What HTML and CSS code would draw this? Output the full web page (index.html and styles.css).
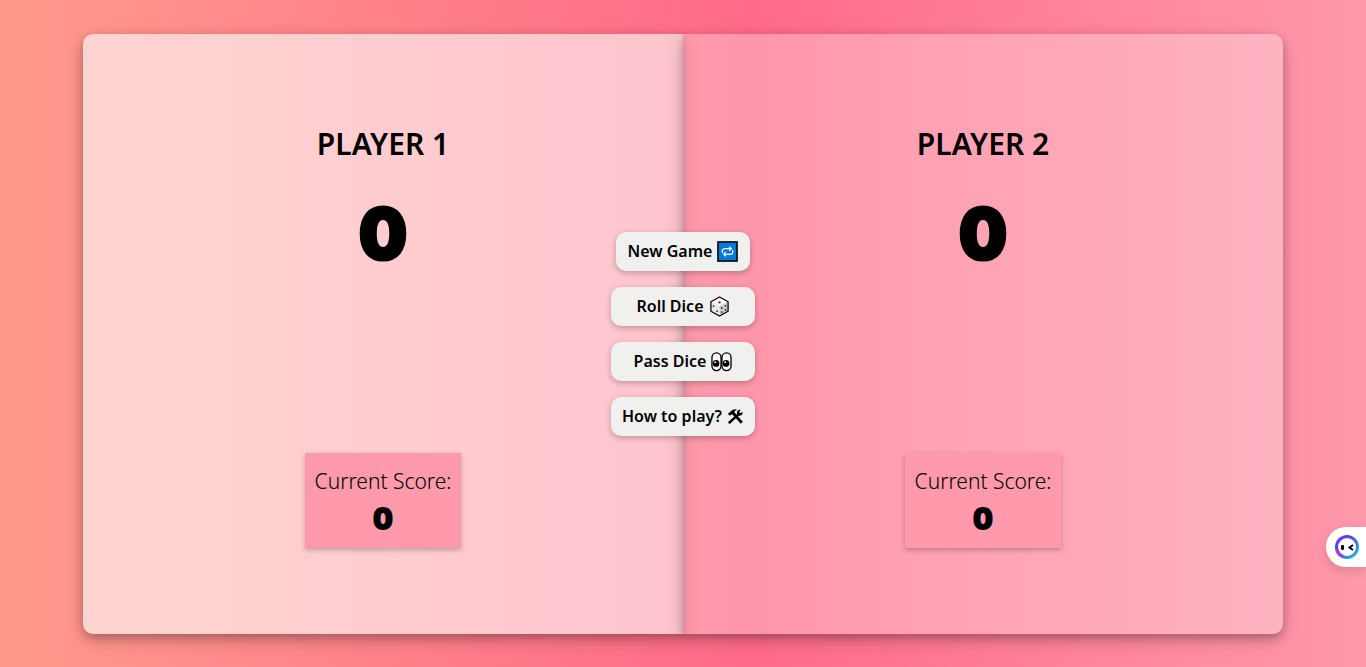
FILE: index.html
```html
<!DOCTYPE html>
<html lang="en">
<head>
<meta charset="utf-8">
<meta name="viewport" content="width=device-width, initial-scale=1">
<title>Dice Game</title>
<link rel="stylesheet" href="styles.css">
</head>
<body>
<main class="board">
  <section class="player player-one">
    <h1 class="name">PLAYER 1</h1>
    <p class="score">0</p>
    <div class="current">
      <p class="current-label">Current Score:</p>
      <p class="current-score">0</p>
    </div>
  </section>
  <section class="player player-two">
    <h1 class="name">PLAYER 2</h1>
    <p class="score">0</p>
    <div class="current">
      <p class="current-label">Current Score:</p>
      <p class="current-score">0</p>
    </div>
  </section>
  <div class="controls">
    <button type="button" class="btn btn-new">New Game
      <svg class="icon" viewBox="0 0 22 22" aria-hidden="true">
        <rect x="1" y="1" width="20" height="20" fill="#0a78d6" stroke="#000" stroke-width="1.6"/>
        <g fill="none" stroke="#fff" stroke-width="1.2">
          <path d="M6 12.500C4.500 10 6 8 8.500 8H14.500M12.800 5.800L15 8L12.800 10.200"/>
          <path d="M16 9.500C17.500 12 16 14 13.500 14H7.500M9.200 11.800L7 14L9.200 16.200"/>
        </g>
      </svg>
    </button>
    <button type="button" class="btn">Roll Dice
      <svg class="icon" viewBox="0 0 22 22" aria-hidden="true">
        <path d="M11 1L20 6V16L11 21L2 16V6Z" fill="#fff"/>
        <path d="M11 10.500L20 6V16L11 21Z" fill="#ccc"/>
        <path d="M2 6L11 10.500V21L2 16Z" fill="#e8e8e8"/>
        <path d="M11 1L20 6V16L11 21L2 16V6Z" fill="none" stroke="#000" stroke-width="1.300" stroke-linejoin="round"/>
        <ellipse cx="11" cy="6.700" rx="1.400" ry="1.100" fill="#c8102e"/>
        <g fill="#222"><circle cx="4.800" cy="10.500" r=".9"/><circle cx="8.500" cy="15.800" r=".9"/><circle cx="13.300" cy="12.500" r=".9"/><circle cx="17.300" cy="10.300" r=".9"/><circle cx="13.300" cy="16.800" r=".9"/><circle cx="17.300" cy="14.500" r=".9"/></g>
      </svg>
    </button>
    <button type="button" class="btn">Pass Dice
      <svg class="icon" viewBox="0 0 22 22" aria-hidden="true">
        <g fill="#fff" stroke="#000" stroke-width="1.400"><rect x="1" y="2" width="9.500" height="18.500" rx="4.700"/><rect x="11.500" y="2" width="9.500" height="18.500" rx="4.700"/></g>
        <circle cx="5.300" cy="13" r="3.500"/><circle cx="15.800" cy="13" r="3.500"/>
        <circle cx="4.400" cy="11.700" r="1" fill="#fff"/><circle cx="14.900" cy="11.700" r="1" fill="#fff"/>
      </svg>
    </button>
    <button type="button" class="btn">How to play?
      <svg class="icon icon-tools" viewBox="0 0 18 18" aria-hidden="true">
        <path d="M1 6L5.500 2.300C7.500 1 9.500 1.200 11 2.500C9 2.500 8 3.200 7.700 4.300L9 5.800L16.800 14.500L14.500 16.600L6.500 7.800L5.500 6.800L4.500 6.800L2.800 8.300Z"/>
        <path d="M1.500 14.500L10.500 6.500C10 4 11.800 1.500 14.500 2L12.800 4.200L14.200 5.600L16.500 4C17 7 14.800 8.800 12.200 8.200L3.500 16.500Q2 17 1.500 16Q1 15.200 1.500 14.500Z"/>
      </svg>
    </button>
  </div>
</main>
<button type="button" class="assistant" aria-label="Open assistant">
  <svg class="assistant-icon" viewBox="0 0 24 24" aria-hidden="true">
    <defs><linearGradient id="ring" x1="0" y1="0" x2="1" y2="1"><stop offset="0" stop-color="#7a45e8"/><stop offset=".3" stop-color="#5040e8"/><stop offset=".55" stop-color="#4070f0"/><stop offset="1" stop-color="#18c0dc"/></linearGradient></defs>
    <circle cx="12" cy="12" r="10.500" fill="#fff" stroke="url(#ring)" stroke-width="3"/>
    <path d="M1.700 14A10.500 10.500 0 0 0 8 21.700" fill="none" stroke="#a63be0" stroke-width="3"/>
    <rect x="6" y="10" width="3" height="5" rx="1.200"/>
    <path d="M18 10L14.500 12.500L18 15" fill="none" stroke="#000" stroke-width="2"/>
  </svg>
</button>
</body>
</html>
```
FILE: styles.css
```css
* {
  box-sizing: border-box;
  margin: 0;
}

body {
  display: flex;
  align-items: center;
  justify-content: center;
  min-height: 100vh;
  padding: 32px 24px;
  color: #000;
  font-family: "Noto Sans", "Open Sans", sans-serif;
  background: linear-gradient(90deg, #ff9a8b 0%, #ff6a88 55%, #ff99ac 100%);
}

.board {
  position: relative;
  display: grid;
  grid-template-columns: 1fr 1fr;
  width: 100%;
  max-width: 1200px;
  min-height: 600px;
}

.player {
  display: flex;
  flex-direction: column;
  align-items: center;
  padding: 88px 24px 86px;
  box-shadow: 0 4px 8px rgba(0, 0, 0, .2), 0 6px 20px rgba(0, 0, 0, .19);
}

.player-one {
  background: rgba(255, 255, 255, .6);
  border-radius: 10px 0 0 10px;
}

.player-two {
  background: rgba(255, 255, 255, .3);
  border-radius: 0 10px 10px 0;
}

.name {
  font-size: 30px;
  font-weight: 600;
  line-height: 44px;
}

.score {
  margin-top: 27px;
  font-family: Inter, sans-serif;
  font-size: 68px;
  font-weight: 800;
  line-height: 80px;
  -webkit-text-stroke: 5px #000;
}

.current {
  margin-top: auto;
  padding: 12px 10px 6px;
  text-align: center;
  background: #ff99ac;
  box-shadow: 0 2px 5px rgba(0, 0, 0, .25);
}

.current-label {
  font-size: 21px;
  font-weight: 300;
  line-height: 32px;
}

.current-score {
  font-family: Inter, sans-serif;
  font-size: 28px;
  font-weight: 800;
  line-height: 45px;
  -webkit-text-stroke: 2px #000;
}

.controls {
  position: absolute;
  top: 50%;
  left: 50%;
  display: flex;
  flex-direction: column;
  align-items: center;
  gap: 16px;
  transform: translate(-50%, -50%);
}

.btn {
  display: flex;
  align-items: center;
  justify-content: center;
  gap: 5px;
  width: 144px;
  height: 39px;
  padding: 0;
  border: 0;
  border-radius: 10px;
  color: #000;
  font-family: inherit;
  font-size: 16px;
  font-weight: 600;
  white-space: nowrap;
  background: #f0f0ef;
  box-shadow: 0 2px 6px rgba(0, 0, 0, .25);
  cursor: pointer;
}

.btn-new {
  width: 134px;
}

.icon {
  width: 21px;
  height: 21px;
}

.icon-tools {
  width: 17px;
  height: 17px;
}

.assistant {
  position: fixed;
  right: 0;
  bottom: 100px;
  display: flex;
  align-items: center;
  width: 40px;
  height: 40px;
  padding: 0 0 0 9px;
  border: 0;
  border-radius: 20px 0 0 20px;
  background: #fff;
  box-shadow: 0 4px 12px rgba(0, 0, 0, .14);
}

.assistant-icon {
  width: 24px;
  height: 24px;
}
```
